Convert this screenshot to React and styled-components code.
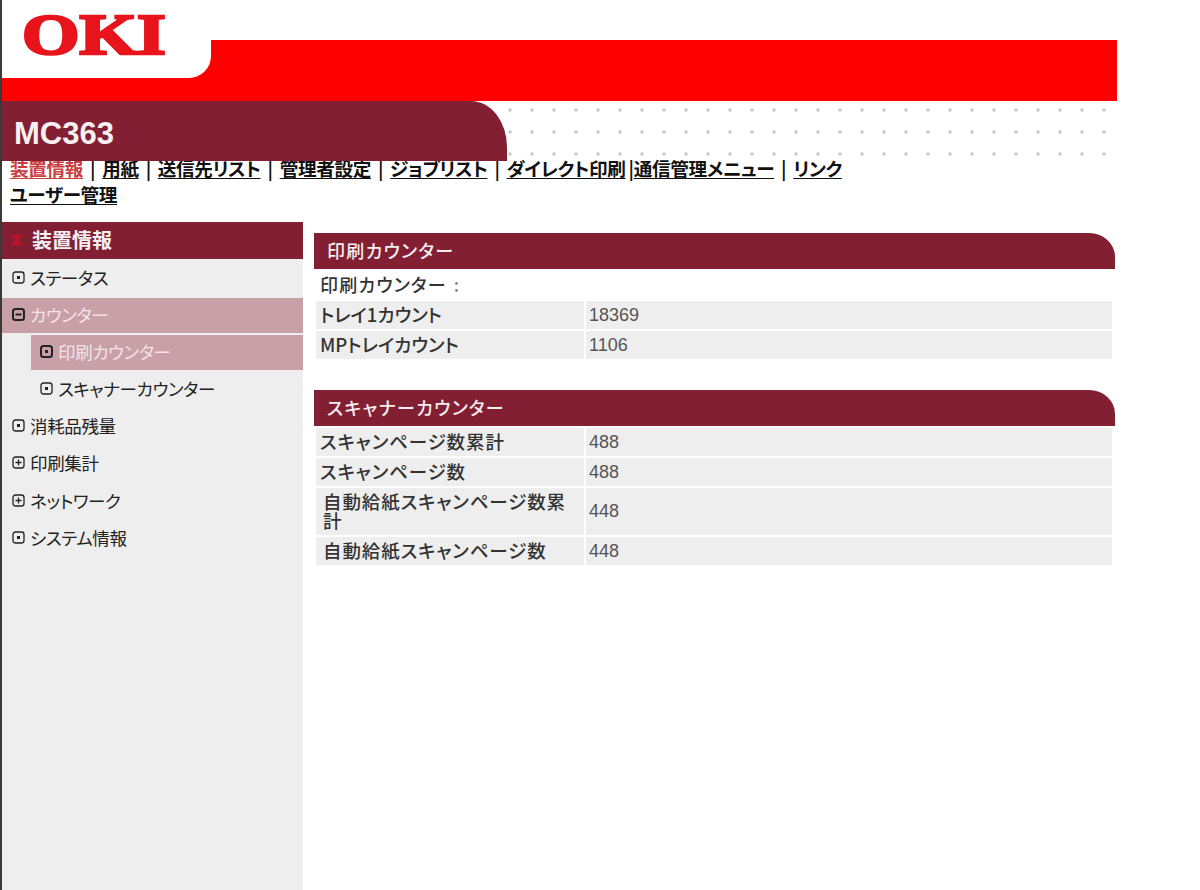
import styled, { createGlobalStyle } from "styled-components";

const GlobalStyle = createGlobalStyle`
    html, body {
        margin: 0;
        padding: 0;
        background: #fff;
    }
    body {
        font-family: "Liberation Sans", "Noto Sans CJK JP", sans-serif;
        font-feature-settings: "palt";
        overflow: hidden;
    }
`

const Page = styled.div`
    height: 890px;
    display: flex;
    flex-direction: column;
    border-left: 2px solid #3a3a3a;
    overflow: hidden;
`

const Banner = styled.div`
    width: 1115px;
    height: 101px;
    background: linear-gradient(to bottom, #fff 40px, #fe0000 40px);
`

const LogoTab = styled.div`
    width: 209px;
    height: 78px;
    box-sizing: border-box;
    padding: 6px 0 0 20px;
    background: #fff;
    border-bottom-right-radius: 22px;
`

const Logo = styled.span`
    display: inline-block;
    font-family: "Liberation Serif", serif;
    font-weight: 700;
    font-size: 56px;
    line-height: 58px;
    color: #e8141c;
    -webkit-text-stroke: 2.5px #e8141c;
    transform: scaleX(1.32);
    transform-origin: left center;
`

const ModelRow = styled.div`
    position: relative;
    z-index: 1;
    width: 1115px;
    height: 60px;
    background-image: radial-gradient(circle, #c8c8c8 1.4px, transparent 1.9px);
    background-size: 22px 22px;
    background-position: -9px -2px;
`

const ModelTab = styled.div`
    width: 505px;
    height: 60px;
    box-sizing: border-box;
    padding-left: 12px;
    background: #821f32;
    border-top-right-radius: 36px 46px;
    color: #f6f0f2;
    font-weight: 700;
    font-size: 31px;
    line-height: 66px;
`

const Nav = styled.nav`
    width: 900px;
    margin-top: -6px;
    padding-left: 8px;
    font-family: "Noto Sans CJK JP", sans-serif;
    font-size: 18.6px;
    font-weight: 700;
    letter-spacing: -0.35px;
    line-height: 26px;
    color: #111;
`

const NavLink = styled.a`
    color: ${p => (p.$active ? "#c8403f" : "#111")};
    text-decoration: underline;
    text-underline-offset: 2px;
`

const NavSep = styled.span`
    margin: ${p => (p.$tight ? "0 0 0 3px" : "0 7px")};
`

const Content = styled.div`
    flex: 1;
    display: flex;
    margin-top: 15px;
    min-height: 0;
`

const Sidebar = styled.aside`
    width: 301px;
    flex-shrink: 0;
    background: #eeeeee;
    font-family: "Noto Sans CJK JP", sans-serif;
    font-size: 17.5px;
    letter-spacing: -0.35px;
    color: #222;
`

const SideHead = styled.div`
    height: 37px;
    display: flex;
    align-items: center;
    gap: 8px;
    padding: 0 0 2px 8px;
    box-sizing: border-box;
    background: #821f32;
    color: #f6f0f2;
    font-size: 20px;
    font-weight: 700;
    letter-spacing: 0;
`

const SideList = styled.div`
    display: flex;
    flex-direction: column;
    gap: 2.2px;
    padding-top: 2px;
`

const SideItem = styled.div`
    height: 35px;
    box-sizing: border-box;
    margin-left: ${p => (p.$sub ? "29px" : "0")};
    display: flex;
    align-items: center;
    gap: 5px;
    padding: 0 0 3px ${p => (p.$sub ? "9px" : "10px")};
    background: ${p => (p.$open ? "#c9a0a8" : "transparent")};
    color: ${p => (p.$open ? "#f3e4e6" : "#222")};
`

const Main = styled.main`
    width: 801px;
    margin-left: 11px;
    padding-top: 11px;
`

const PanelHead = styled.h2`
    margin: 0;
    height: 36px;
    padding-left: 13px;
    background: #821f32;
    border-top-right-radius: 26px 24px;
    color: #f6eef0;
    font-family: "Noto Sans CJK JP", sans-serif;
    font-size: 18px;
    font-weight: 500;
    letter-spacing: 1.3px;
    line-height: 34px;
`

const Caption = styled.div`
    height: 30px;
    padding-left: 6px;
    font-family: "Noto Sans CJK JP", sans-serif;
    font-size: 18px;
    font-weight: 500;
    letter-spacing: 1.2px;
    line-height: 30px;
    color: #333;
`

const Colon = styled.span`
    margin-left: 7px;
    color: #888;
`

const Table = styled.table`
    width: 800px;
    border-spacing: 2px;
    border-collapse: separate;
    margin-bottom: 29px;
`

const Label = styled.td`
    width: 268px;
    box-sizing: border-box;
    padding: 4px 8px 5px ${p => (p.$inset ? "7px" : "4px")};
    background: #eeeeee;
    font-family: "Noto Sans CJK JP", sans-serif;
    font-size: 18.5px;
    font-weight: 500;
    letter-spacing: ${p => (p.$wide ? "0.9px" : "0")};
    line-height: 19px;
    color: #333;
`

const Value = styled.td`
    padding: 0 0 0 3px;
    background: #eeeeee;
    font-size: 18px;
    color: #555;
`

const TreeIcon = ({ kind, bold }) => (
    <svg width="13" height="13" viewBox="0 0 13 13" fill="none" stroke="#222" strokeWidth={bold ? 2 : 1.3}>
        <rect x="1" y="1" width="11" height="11" rx="2.5" />
        {kind === "dot" && <rect x="5" y="5" width="3" height="3" fill="#222" stroke="none" />}
        {kind === "minus" && <path d="M3.5 6.5h6" />}
        {kind === "plus" && <path d="M3.5 6.5h6M6.5 3.5v6" />}
    </svg>
)

const Star = () => (
    <svg width="14" height="14" viewBox="0 0 14 14">
        <path d="M2 2l10 10M12 2L2 12M7 1v12" stroke="#b81528" strokeWidth="3" />
    </svg>
)

const navItems = [
    { text: "用紙" },
    { text: "送信先リスト" },
    { text: "管理者設定" },
    { text: "ジョブリスト" },
    { text: "ダイレクト印刷" },
    { text: "通信管理メニュー", tight: true },
    { text: "リンク" },
]

const sideItems = [
    { text: "ステータス", icon: "dot" },
    { text: "カウンター", icon: "minus", open: true },
    { text: "印刷カウンター", icon: "dot", open: true, sub: true },
    { text: "スキャナーカウンター", icon: "dot", sub: true },
    { text: "消耗品残量", icon: "dot" },
    { text: "印刷集計", icon: "plus" },
    { text: "ネットワーク", icon: "plus" },
    { text: "システム情報", icon: "dot" },
]

const printRows = [
    { label: "トレイ1カウント", value: "18369" },
    { label: "MPトレイカウント", value: "1106" },
]

const scanRows = [
    { label: "スキャンページ数累計", value: "488", wide: true },
    { label: "スキャンページ数", value: "488", wide: true },
    { label: "自動給紙スキャンページ数累計", value: "448", wide: true, inset: true },
    { label: "自動給紙スキャンページ数", value: "448", wide: true, inset: true },
]

const Rows = ({ rows }) => (
    <Table>
        <tbody>
            {rows.map(row => (
                <tr key={row.label}>
                    <Label $wide={row.wide} $inset={row.inset}>{row.label}</Label>
                    <Value>{row.value}</Value>
                </tr>
            ))}
        </tbody>
    </Table>
)

const App = () => (
    <Page>
        <GlobalStyle />
        <Banner>
            <LogoTab>
                <Logo>OKI</Logo>
            </LogoTab>
        </Banner>
        <ModelRow>
            <ModelTab>MC363</ModelTab>
        </ModelRow>
        <Nav>
            <NavLink $active>装置情報</NavLink>
            {navItems.map(item => (
                <span key={item.text}>
                    <NavSep $tight={item.tight}>|</NavSep>
                    <NavLink>{item.text}</NavLink>
                </span>
            ))}
            <br />
            <NavLink>ユーザー管理</NavLink>
        </Nav>
        <Content>
            <Sidebar>
                <SideHead>
                    <Star />
                    装置情報
                </SideHead>
                <SideList>
                    {sideItems.map(item => (
                        <SideItem key={item.text} $open={item.open} $sub={item.sub}>
                            <TreeIcon kind={item.icon} bold={item.open} />
                            {item.text}
                        </SideItem>
                    ))}
                </SideList>
            </Sidebar>
            <Main>
                <PanelHead>印刷カウンター</PanelHead>
                <Caption>印刷カウンター<Colon>:</Colon></Caption>
                <Rows rows={printRows} />
                <PanelHead>スキャナーカウンター</PanelHead>
                <Rows rows={scanRows} />
            </Main>
        </Content>
    </Page>
)

export default App
